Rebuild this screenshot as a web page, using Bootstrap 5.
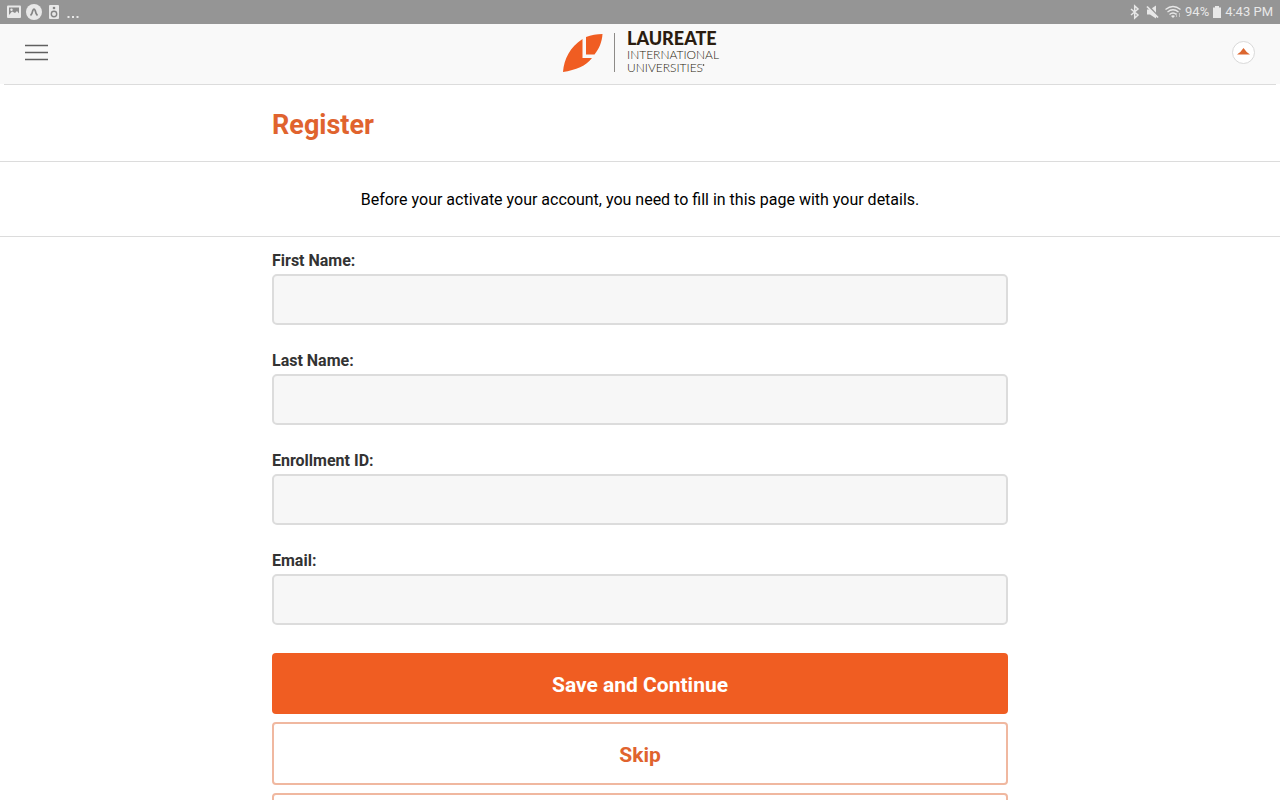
<!DOCTYPE html>
<html lang="en">
<head>
<meta charset="utf-8">
<meta name="viewport" content="width=device-width, initial-scale=1">
<title>Register</title>
<link href="https://cdn.jsdelivr.net/npm/bootstrap@5.3.0/dist/css/bootstrap.min.css" rel="stylesheet">
<style>
  body { font-family: Roboto, sans-serif; font-size: 16px; line-height: 24px; color: #111; background: #fff; }
  .status-bar { height: 24px; background: #959595; color: #e8e8e8; font-size: 13px; padding: 0 7px; }
  .app-header { height: 60px; background: #f9f9f9; padding: 0 25px 3px; }
  .header-rule { height: 1px; background: #dcdcdc; margin: 0 4px; }
  .plain-btn { border: 0; padding: 0; background: none; line-height: 0; }
  .band { border-bottom: 1px solid #dcdcdc; }
  .form-col { width: 100%; max-width: 736px; margin: 0 auto; }
  .page-title { font-size: 27px; line-height: 32px; font-weight: 700; color: #e0632e; padding: 24px 0 20px; margin: 0; }
  .intro { padding: 26px 0 24px; margin: 0; color: #000; }
  .field-group { margin-bottom: 24px; }
  .field-group .form-label { display: block; font-weight: 700; color: #333; margin: 0 0 1px; line-height: 24px; }
  .field-group .form-control { height: 51px; background: #f7f7f7; border: 2px solid #dcdcdc; border-radius: 5px; }
  .action { font-size: 21px; font-weight: 700; border-radius: 4px; line-height: 32px; padding: 8px 12px 6px; }
  .action-main { height: 61px; background: #f05d22; color: #fff; border: 0; }
  .action-line { height: 63px; background: #fff; color: #e0632e; border: 2px solid #f0b8a0; }
</style>
</head>
<body>
<div class="status-bar d-flex align-items-center justify-content-between">
  <div class="d-flex align-items-center">
    <svg width="72" height="24" viewBox="7 0 72 24" aria-hidden="true">
      <path fill="#e8e8e8" d="M8 5.500h12a1 1 0 0 1 1 1v10.500a1 1 0 0 1-1 1H8a1 1 0 0 1-1-1v-10.500a1 1 0 0 1 1-1z"/>
      <path fill="#8a8a8a" d="M9 7.500h10v6l-2-2.500-2 2-3-1.500-3 3.500z"/>
      <circle cx="11.500" cy="9.700" r="1.200" fill="#e8e8e8"/>
      <circle cx="34" cy="12" r="8" fill="#e8e8e8"/>
      <path d="M30.500 15.500q1.500-1 2.300-5 1.200-3 2.400 0 .8 4 2.300 5" fill="none" stroke="#858585" stroke-width="1.700"/>
      <rect x="49" y="5" width="10" height="14" rx="1" fill="#e8e8e8"/>
      <circle cx="54" cy="14" r="2.700" fill="none" stroke="#858585" stroke-width="1.400"/>
      <circle cx="54" cy="8" r="1.300" fill="#858585"/>
      <path fill="#e8e8e8" d="M67.500 16h2v2h-2zM72 16h2v2h-2zM76.500 16h2v2h-2z"/>
    </svg>
  </div>
  <div class="d-flex align-items-center">
    <svg width="52" height="24" viewBox="1130 0 52 24" aria-hidden="true" fill="none" stroke="#e8e8e8">
      <path stroke-width="1.500" d="M1132 9l7 6-3.300 3V6l3.300 3-7 6"/>
      <path stroke="none" fill="#e8e8e8" d="M1148 9.500h3l6-4v13l-6-4h-3z"/>
      <path stroke="#959595" stroke-width="2" d="M1149.500 6l10 11"/>
      <path stroke-width="1.700" d="M1148 6.500l11 11"/>
      <path stroke-width="1.300" d="M1166.500 9.500q7.500-6 15 0M1168.500 12q5.500-4.500 11 0M1170.500 14.500q3.500-3 7 0"/>
      <path stroke="none" fill="#e8e8e8" d="M1172 16q2-1.500 4 0l-2 2z"/>
      <path stroke="#c2c2c2" d="M1177.500 17v-4M1180.500 13v4"/>
    </svg>
    <span class="ms-1 me-1">94%</span>
    <svg width="8" height="24" viewBox="0 0 8 24" aria-hidden="true"><path fill="#e8e8e8" d="M2 6h4v1.500h2V18H0V7.500h2z"/></svg>
    <span class="ms-1">4:43 PM</span>
  </div>
</div>

<header>
  <nav class="app-header d-flex align-items-center justify-content-between">
    <button type="button" class="plain-btn" aria-label="Menu">
      <svg width="23" height="17" viewBox="0 0 23 17"><path d="M0 1.500h23M0 8.500h23M0 15.500h23" stroke="#606060" stroke-width="1.400"/></svg>
    </button>
    <a href="#" class="d-block lh-1" aria-label="Laureate International Universities">
      <svg width="160" height="56" viewBox="560 25 160 56">
        <path fill="#f05d22" d="M563 72C564 59 570 47 582.500 39V58H592C586 66 576 70 563 72z"/>
        <path fill="#f05d22" d="M586 37C591 35 597 34 602.500 34C602 42 599 49 594.500 54.500H586z"/>
        <path d="M614.500 33v39" stroke="#8d8b88"/>
        <g font-family="Lato, sans-serif" fill="#2b1d10">
          <text x="627" y="45" font-size="18" font-weight="900">LAUREATE</text>
          <g font-weight="300" font-size="12"><text x="627" y="59">INTERNATIONAL</text><text x="627" y="72">UNIVERSITIES</text></g>
          <circle cx="703.500" cy="65" r=".8"/>
        </g>
      </svg>
    </a>
    <button type="button" class="plain-btn" aria-label="Account">
      <svg width="23" height="23" viewBox="0 0 23 23"><circle cx="11.500" cy="11.500" r="11" fill="#fff" stroke="#d9d9d9"/><path d="M5 13.500Q9 11 11.500 7Q14 11 18 13.500z" fill="#dc662f"/></svg>
    </button>
  </nav>
</header>
<div class="header-rule"></div>

<main>
  <div class="band"><div class="form-col"><h1 class="page-title">Register</h1></div></div>
  <div class="band"><p class="intro text-center">Before your activate your account, you need to fill in this page with your details.</p></div>
  <form class="form-col pt-2">
    <div class="field-group pt-1"><label class="form-label" for="first">First Name:</label><input class="form-control" id="first" type="text"></div>
    <div class="field-group"><label class="form-label" for="last">Last Name:</label><input class="form-control" id="last" type="text"></div>
    <div class="field-group"><label class="form-label" for="enroll">Enrollment ID:</label><input class="form-control" id="enroll" type="text"></div>
    <div class="field-group"><label class="form-label" for="email">Email:</label><input class="form-control" id="email" type="email"></div>
    <div class="d-grid gap-2 pt-1">
      <button type="submit" class="btn action action-main">Save and Continue</button>
      <button type="button" class="btn action action-line">Skip</button>
      <button type="button" class="btn action action-line" aria-label="More"></button>
    </div>
  </form>
</main>
<script src="https://cdn.jsdelivr.net/npm/bootstrap@5.3.0/dist/js/bootstrap.bundle.min.js"></script>
</body>
</html>
